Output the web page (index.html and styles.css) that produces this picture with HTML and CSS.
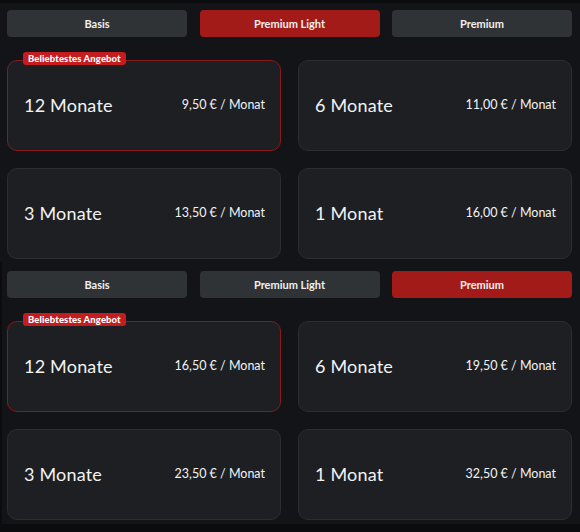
FILE: index.html
```html
<!DOCTYPE html>
<html lang="de">
<head>
<meta charset="utf-8">
<link rel="stylesheet" href="styles.css">
</head>
<body>
<div class="page">
  <section class="plan">
    <div class="tabs">
      <div class="tab">Basis</div>
      <div class="tab active">Premium Light</div>
      <div class="tab">Premium</div>
    </div>
    <div class="cards">
      <div class="card featured">
        <span class="badge">Beliebtestes Angebot</span>
        <span class="term">12 Monate</span>
        <span class="price">9,50 € / Monat</span>
      </div>
      <div class="card">
        <span class="term">6 Monate</span>
        <span class="price">11,00 € / Monat</span>
      </div>
      <div class="card">
        <span class="term">3 Monate</span>
        <span class="price">13,50 € / Monat</span>
      </div>
      <div class="card">
        <span class="term">1 Monat</span>
        <span class="price">16,00 € / Monat</span>
      </div>
    </div>
  </section>
  <section class="plan second">
    <div class="tabs">
      <div class="tab">Basis</div>
      <div class="tab">Premium Light</div>
      <div class="tab active">Premium</div>
    </div>
    <div class="cards">
      <div class="card featured">
        <span class="badge">Beliebtestes Angebot</span>
        <span class="term">12 Monate</span>
        <span class="price">16,50 € / Monat</span>
      </div>
      <div class="card">
        <span class="term">6 Monate</span>
        <span class="price">19,50 € / Monat</span>
      </div>
      <div class="card">
        <span class="term">3 Monate</span>
        <span class="price">23,50 € / Monat</span>
      </div>
      <div class="card">
        <span class="term">1 Monat</span>
        <span class="price">32,50 € / Monat</span>
      </div>
    </div>
  </section>
</div>
</body>
</html>
```
FILE: styles.css
```css
html, body {
  margin: 0;
  padding: 0;
  background: #0b0c0d;
  font-family: Lato, "Open Sans", "Liberation Sans", sans-serif;
  color: #f2f3f4;
}
.page {
  width: 580px;
  height: 532px;
  padding-top: 3px;
  box-sizing: border-box;
}
.plan {
  background: #121417;
  height: 259px;
  box-sizing: border-box;
  padding: 7px 8px 0 7px;
}
.plan.second {
  height: 262px;
  padding-top: 9px;
  border-left: 2px solid #0b0c0d;
  padding-left: 5px;
}
.tabs {
  display: grid;
  grid-template-columns: 180px 180px 180px;
  justify-content: space-between;
  margin-bottom: 23px;
}
.tab {
  height: 27px;
  border-radius: 4px;
  background: #303336;
  color: #f0f0f0;
  font-size: 11px;
  font-weight: 700;
  display: flex;
  align-items: center;
  justify-content: center;
}
.tab.active {
  background: #a31b18;
}
.cards {
  display: grid;
  grid-template-columns: 274px 274px;
  justify-content: space-between;
  row-gap: 17px;
}
.card {
  position: relative;
  height: 91px;
  box-sizing: border-box;
  border: 1px solid #2a2d31;
  border-radius: 10px;
  background: #1d1f22;
  display: flex;
  align-items: center;
  justify-content: space-between;
  padding: 0 15px 2px 16px;
}
.card.featured {
  border-color: #8a1a1a;
}
.term {
  font-size: 18px;
  font-weight: 400;
  letter-spacing: 0.2px;
}
.price {
  font-size: 12.5px;
}
.badge {
  position: absolute;
  left: 15px;
  top: -9px;
  background: #c41c1f;
  color: #fff;
  font-size: 9.5px;
  font-weight: 900;
  letter-spacing: 0.1px;
  line-height: 13px;
  padding: 0 5px;
  border-radius: 3px;
}
```
